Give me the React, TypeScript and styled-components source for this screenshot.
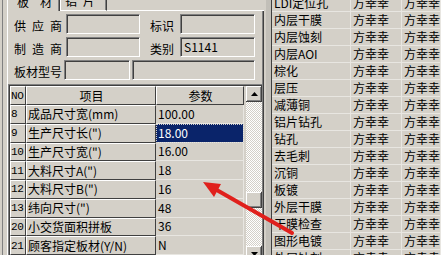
import React from "react";
import styled, { createGlobalStyle } from "styled-components";

const GlobalStyle = createGlobalStyle`
  html, body { margin: 0; padding: 0; }
  body {
    background: #d4d0c8;
    font-family: "Noto Sans CJK SC", "Liberation Sans", sans-serif;
    font-size: 12px;
    color: #000;
    overflow: hidden;
  }
`;

const Screen = styled.div`
  position: relative;
  width: 441px;
  height: 255px;
  display: flex;
  overflow: hidden;
  background: #d4d0c8;
`;

const LeftPane = styled.div`
  flex: none;
  width: 257px;
  margin-left: 2px;
  border-left: 1px solid #808080;
  padding-left: 4px;
  display: flex;
  flex-direction: column;
`;

const TabStrip = styled.div`
  flex: none;
  display: flex;
  height: 11px;
`;

const Tab = styled.div<{ $active?: boolean; $width: number; $pad: number }>`
  box-sizing: border-box;
  flex: none;
  width: ${({ $width }) => $width}px;
  height: 11px;
  overflow: hidden;
  display: flex;
  align-items: flex-end;
  padding-left: ${({ $pad }) => $pad}px;
  border-left: 1px solid #fff;
  border-right: 1px solid #404040;
  border-bottom: ${({ $active }) => ($active ? "none" : "1px solid #fff")};
  box-shadow: inset -1px 0 #808080;
`;

const TabLabel = styled.span<{ $spacing: number }>`
  line-height: 12px;
  margin-bottom: 3px;
  letter-spacing: ${({ $spacing }) => $spacing}px;
  white-space: nowrap;
`;

const TabFiller = styled.div`
  flex: 1;
  border-bottom: 1px solid #fff;
`;

const TabPage = styled.div`
  flex: 1;
  min-height: 0;
  display: flex;
  flex-direction: column;
  border-left: 1px solid #fff;
  border-right: 1px solid #404040;
  box-shadow: inset -1px 0 #808080;
  padding: 3px 1px 0 0;
`;

const FormRow = styled.div`
  flex: none;
  display: flex;
  height: 20px;
  margin-bottom: 3px;

  &:last-of-type {
    margin-bottom: 0;
  }
`;

const Label = styled.div`
  flex: none;
  width: 48px;
  margin-left: 6px;
  padding-top: 3px;
  line-height: 17px;
  text-align: justify;
  text-align-last: justify;
  white-space: nowrap;
`;

const SideLabel = styled.div`
  flex: none;
  width: 34px;
  padding-right: 6px;
  padding-top: 3px;
  line-height: 17px;
  text-align: right;
`;

const Field = styled.div<{ $width: number; $gap?: number }>`
  box-sizing: border-box;
  flex: none;
  width: ${({ $width }) => $width}px;
  height: 20px;
  margin-left: ${({ $gap }) => $gap ?? 0}px;
  border-top: 1px solid #808080;
  border-left: 1px solid #808080;
  border-right: 1px solid #fff;
  border-bottom: 1px solid #fff;
  box-shadow: inset 1px 1px #404040;
  padding-left: 3px;
  line-height: 18px;
  white-space: nowrap;
`;

const GridFrame = styled.div`
  flex: 1;
  min-height: 0;
  margin-top: 1px;
  border-top: 1px solid #808080;
  border-left: 1px solid #808080;
  overflow: hidden;
`;

const GridInner = styled.div`
  display: flex;
  align-items: flex-start;
  border-top: 1px solid #404040;
  border-left: 1px solid #404040;
`;

const Table = styled.div`
  flex: none;
  display: grid;
  grid-template-columns: 16px 130px 88px;
  grid-template-rows: 19px;
  grid-auto-rows: 18.75px;
`;

const FixedCell = styled.div<{ $center?: boolean; $narrow?: boolean }>`
  box-sizing: border-box;
  display: flex;
  align-items: center;
  justify-content: ${({ $center }) => ($center ? "center" : "flex-start")};
  border-top: 1px solid #fff;
  border-left: 1px solid #fff;
  border-right: 1px solid #404040;
  border-bottom: 1px solid #404040;
  padding-left: ${({ $narrow }) => ($narrow ? 0 : 1)}px;
  line-height: 16px;
  font-family: ${({ $narrow }) =>
    $narrow ? `"Liberation Mono", "Noto Sans CJK SC", monospace` : "inherit"};
  font-size: ${({ $narrow }) => ($narrow ? 11 : 12)}px;
  letter-spacing: ${({ $narrow }) => ($narrow ? "-0.4px" : "normal")};
  white-space: nowrap;
  overflow: hidden;
`;

const DataCell = styled.div<{ $selected?: boolean }>`
  box-sizing: border-box;
  display: flex;
  align-items: center;
  border-right: 1px solid #e8e6e1;
  border-bottom: 1px solid #e8e6e1;
  padding-left: 2px;
  line-height: 16px;
  white-space: nowrap;
  background: ${({ $selected }) => ($selected ? "#0a246a" : "transparent")};
  color: ${({ $selected }) => ($selected ? "#fff" : "#000")};
  outline: ${({ $selected }) => ($selected ? "1px dotted #d4d0c8" : "none")};
  outline-offset: -1px;
`;

const Scrollbar = styled.div`
  flex: none;
  width: 16px;
  height: 176px;
  margin-left: 2px;
  display: flex;
  flex-direction: column;
`;

const raised = `
  background: #d4d0c8;
  box-shadow: inset -1px -1px #404040, inset 1px 1px #fff, inset -2px -2px #808080;
`;

const ScrollButton = styled.div`
  flex: none;
  height: 16px;
  display: flex;
  align-items: center;
  justify-content: center;
  ${raised}
`;

const Track = styled.div`
  flex: 1;
  background-color: #d4d0c8;
  background-image: conic-gradient(#fff 25%, #d4d0c8 0 50%, #fff 0 75%, #d4d0c8 0);
  background-size: 2px 2px;
`;

const Thumb = styled.div<{ $offset: number }>`
  height: 16px;
  margin-top: ${({ $offset }) => $offset}px;
  ${raised}
`;

const Splitter = styled.div`
  flex: none;
  width: 5px;
  border-left: 2px solid #d4d0c8;
  border-right: 1px solid #404040;
  background: #c2bfb8;
`;

const RightPane = styled.div`
  flex: 1;
  min-width: 0;
  overflow: hidden;
`;

const ProcessGrid = styled.div`
  display: grid;
  grid-template-columns: 79px 51px 1fr;
  grid-auto-rows: 17px;
  margin-top: -5px;
`;

const ProcessCell = styled.div`
  box-sizing: border-box;
  border-right: 1px solid #e8e6e1;
  border-bottom: 1px solid #e8e6e1;
  padding-left: 2px;
  line-height: 16px;
  white-space: nowrap;
  overflow: hidden;
`;

const Overlay = styled.svg`
  position: absolute;
  left: 0;
  top: 0;
  pointer-events: none;
`;

const params = [
  { no: "8", name: "成品尺寸宽(mm)", value: "100.00" },
  { no: "9", name: "生产尺寸长(\")", value: "18.00", selected: true },
  { no: "10", name: "生产尺寸宽(\")", value: "16.00" },
  { no: "11", name: "大料尺寸A(\")", value: "18" },
  { no: "12", name: "大料尺寸B(\")", value: "16" },
  { no: "13", name: "纬向尺寸(\")", value: "48" },
  { no: "20", name: "小交货面积拼板", value: "36" },
  { no: "21", name: "顾客指定板材(Y/N)", value: "N" },
];

const processes = [
  "LDI定位孔",
  "内层干膜",
  "内层蚀刻",
  "内层AOI",
  "棕化",
  "层压",
  "减薄铜",
  "铝片钻孔",
  "钻孔",
  "去毛刺",
  "沉铜",
  "板镀",
  "外层干膜",
  "干膜检查",
  "图形电镀",
  "外层蚀刻",
];

function Arrow({ up }: { up?: boolean }) {
  return (
    <svg width="7" height="4" viewBox="0 0 7 4">
      <polygon points={up ? "3.5,0 7,4 0,4" : "0,0 7,0 3.5,4"} fill="#000" />
    </svg>
  );
}

export default function App() {
  return (
    <Screen>
      <GlobalStyle />
      <LeftPane>
        <TabStrip>
          <Tab $active $width={53} $pad={9}>
            <TabLabel $spacing={11}>板材</TabLabel>
          </Tab>
          <Tab $width={47} $pad={4}>
            <TabLabel $spacing={6}>铝片</TabLabel>
          </Tab>
          <TabFiller />
        </TabStrip>
        <TabPage>
          <FormRow>
            <Label>供应商</Label>
            <Field $width={74} $gap={4} />
            <SideLabel>标识</SideLabel>
            <Field $width={75} />
          </FormRow>
          <FormRow>
            <Label>制造商</Label>
            <Field $width={74} $gap={4} />
            <SideLabel>类别</SideLabel>
            <Field $width={75}>S1141</Field>
          </FormRow>
          <FormRow>
            <Label>板材型号</Label>
            <Field $width={66} $gap={2} />
            <Field $width={123} $gap={2} />
          </FormRow>
          <GridFrame>
            <GridInner>
              <Table>
                <FixedCell $narrow>NO</FixedCell>
                <FixedCell $center>项目</FixedCell>
                <FixedCell $center>参数</FixedCell>
                {params.map((p) => (
                  <React.Fragment key={p.no}>
                    <FixedCell $narrow>{p.no}</FixedCell>
                    <FixedCell>{p.name}</FixedCell>
                    <DataCell $selected={p.selected}>{p.value}</DataCell>
                  </React.Fragment>
                ))}
              </Table>
              <Scrollbar>
                <ScrollButton>
                  <Arrow up />
                </ScrollButton>
                <Track>
                  <Thumb $offset={90} />
                </Track>
                <ScrollButton>
                  <Arrow />
                </ScrollButton>
              </Scrollbar>
            </GridInner>
          </GridFrame>
        </TabPage>
      </LeftPane>
      <Splitter />
      <RightPane>
        <ProcessGrid>
          {processes.map((name) => (
            <React.Fragment key={name}>
              <ProcessCell>{name}</ProcessCell>
              <ProcessCell>方幸幸</ProcessCell>
              <ProcessCell>方幸幸</ProcessCell>
            </React.Fragment>
          ))}
        </ProcessGrid>
      </RightPane>
      <Overlay width="441" height="255" viewBox="0 0 441 255">
        <line x1="292" y1="233" x2="215" y2="189" stroke="#e0201c" strokeWidth="4" strokeLinecap="round" />
        <polygon points="203,182 221,184 214,197" fill="#e0201c" />
      </Overlay>
    </Screen>
  );
}
